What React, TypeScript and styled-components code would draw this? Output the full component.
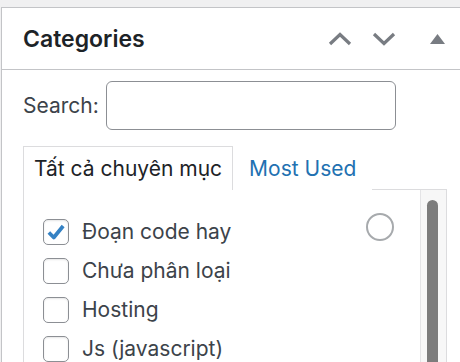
import React from "react";
import styled, { createGlobalStyle } from "styled-components";

const Global = createGlobalStyle`
  html, body {
    margin: 0;
    padding: 0;
    background: #f0f0f1;
    overflow: hidden;
    font-family: Inter, "Noto Sans", sans-serif;
  }
`;

const Panel = styled.div`
  margin: 7px 0 0 1px;
  width: 500px;
  height: 400px;
  background: #fff;
  border: 1px solid #c3c4c7;
  box-sizing: border-box;
`;

const Header = styled.div`
  width: 458px;
  height: 61px;
  box-sizing: content-box;
  display: flex;
  align-items: center;
  padding-left: 21px;
  border-bottom: 1px solid #c3c4c7;
`;

const Title = styled.h2`
  margin: 0;
  flex: 1;
  font-size: 23px;
  font-weight: 600;
  color: #1d2327;
`;

const HeadButtons = styled.div`
  display: flex;
  align-items: center;
  padding-right: 36px;
`;

const IconButton = styled.span<{ $gap: number }>`
  display: flex;
  align-items: center;
  justify-content: center;
  margin-left: ${(p) => p.$gap}px;
  color: #787c82;
`;

const Body = styled.div`
  padding: 11px 0 0 21px;
`;

const SearchRow = styled.label`
  display: flex;
  align-items: center;
  gap: 7px;
  font-size: 21px;
  color: #3c434a;
`;

const SearchInput = styled.input`
  width: 290px;
  height: 49px;
  box-sizing: border-box;
  border: 1px solid #8c8f94;
  border-radius: 6px;
  outline: none;
  font: inherit;
`;

const Tabs = styled.ul`
  display: flex;
  margin: 16px 0 0;
  padding: 0;
  list-style: none;
  font-size: 21px;
`;

const Tab = styled.li<{ $active?: boolean }>`
  height: 44px;
  box-sizing: border-box;
  display: flex;
  align-items: center;
  padding: 0 ${(p) => (p.$active ? "10px" : "15px")};
  margin-bottom: -1px;
  position: relative;
  background: #fff;
  color: ${(p) => (p.$active ? "#1d2327" : "#2271b1")};
  border: 1px solid ${(p) => (p.$active ? "#dcdcde" : "transparent")};
  border-bottom: none;
`;

const ListBox = styled.div`
  width: 424px;
  height: 200px;
  box-sizing: border-box;
  border: 1px solid #dcdcde;
  display: flex;
`;

const Items = styled.ul`
  flex: 1;
  margin: 0;
  padding: 22px 0 0 19px;
  list-style: none;
`;

const Item = styled.li`
  display: flex;
  align-items: center;
  height: 39px;
  gap: 13px;
  font-size: 21px;
  color: #3c434a;
  position: relative;
`;

const Box = styled.span`
  width: 26px;
  height: 26px;
  box-sizing: border-box;
  border: 1px solid #8c8f94;
  border-radius: 5px;
  box-shadow: inset 0 1px 2px rgba(0, 0, 0, 0.1);
  display: flex;
  align-items: center;
  justify-content: center;
  flex: none;
`;

const Ring = styled.span`
  position: absolute;
  right: 26px;
  top: 1px;
  width: 28px;
  height: 28px;
  box-sizing: border-box;
  border: 2px solid #a7aaad;
  border-radius: 50%;
`;

const Track = styled.div`
  width: 26px;
  border-left: 1px solid #e4e4e6;
  background: #f7f7f7;
  padding: 10px 0 0 6px;
  box-sizing: border-box;
`;

const Thumb = styled.div`
  width: 11px;
  height: 200px;
  border-radius: 6px;
  background: #7c7c7c;
`;

const categories = [
  { name: "Đoạn code hay", checked: true },
  { name: "Chưa phân loại" },
  { name: "Hosting" },
  { name: "Js (javascript)" },
];

export default function App() {
  return (
    <>
      <Global />
      <Panel>
        <Header>
          <Title>Categories</Title>
          <HeadButtons>
            <IconButton $gap={0}>
              <svg width="24" height="14" viewBox="0 0 24 14">
                <path d="M2 12 L12 2.5 L22 12" fill="none" stroke="currentColor" strokeWidth="3.2" />
              </svg>
            </IconButton>
            <IconButton $gap={20}>
              <svg width="24" height="14" viewBox="0 0 24 14">
                <path d="M2 2 L12 11.5 L22 2" fill="none" stroke="currentColor" strokeWidth="3.2" />
              </svg>
            </IconButton>
            <IconButton $gap={34}>
              <svg width="15" height="10" viewBox="0 0 15 10">
                <path d="M7.5 0 L15 10 L0 10 Z" fill="currentColor" />
              </svg>
            </IconButton>
          </HeadButtons>
        </Header>
        <Body>
          <SearchRow>
            Search:
            <SearchInput type="search" />
          </SearchRow>
          <Tabs>
            <Tab $active>Tất cả chuyên mục</Tab>
            <Tab>Most Used</Tab>
          </Tabs>
          <ListBox>
            <Items>
              {categories.map((c, i) => (
                <Item key={c.name}>
                  <Box>
                    {c.checked && (
                      <svg width="22" height="22" viewBox="0 0 20 20">
                        <path d="M3.5 10.5 L8 15 L16.5 4.5" fill="none" stroke="#3582c4" strokeWidth="3.4" strokeLinejoin="round" />
                      </svg>
                    )}
                  </Box>
                  {c.name}
                  {i === 0 && <Ring />}
                </Item>
              ))}
            </Items>
            <Track>
              <Thumb />
            </Track>
          </ListBox>
        </Body>
      </Panel>
    </>
  );
}
